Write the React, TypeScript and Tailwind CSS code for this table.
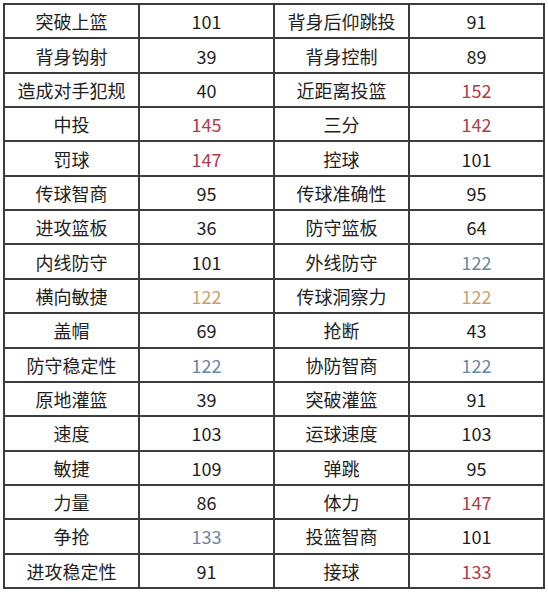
import React from "react";

type C = "k" | "r" | "b" | "o";
const rows: [string, string, C, string, string, C][] = [
  ["突破上篮", "101", "k", "背身后仰跳投", "91", "k"],
  ["背身钩射", "39", "k", "背身控制", "89", "k"],
  ["造成对手犯规", "40", "k", "近距离投篮", "152", "r"],
  ["中投", "145", "r", "三分", "142", "r"],
  ["罚球", "147", "r", "控球", "101", "k"],
  ["传球智商", "95", "k", "传球准确性", "95", "k"],
  ["进攻篮板", "36", "k", "防守篮板", "64", "k"],
  ["内线防守", "101", "k", "外线防守", "122", "b"],
  ["横向敏捷", "122", "o", "传球洞察力", "122", "o"],
  ["盖帽", "69", "k", "抢断", "43", "k"],
  ["防守稳定性", "122", "b", "协防智商", "122", "b"],
  ["原地灌篮", "39", "k", "突破灌篮", "91", "k"],
  ["速度", "103", "k", "运球速度", "103", "k"],
  ["敏捷", "109", "k", "弹跳", "95", "k"],
  ["力量", "86", "k", "体力", "147", "r"],
  ["争抢", "133", "b", "投篮智商", "101", "k"],
  ["进攻稳定性", "91", "k", "接球", "133", "r"],
];

const color: Record<C, string> = {
  k: "text-[#1e1e1e]",
  r: "text-[#b03a48]",
  b: "text-[#6c84a6]",
  o: "text-[#c9a06a]",
};

function Cell({ text, c }: { text: string; c: C }) {
  return (
    <div className={`bg-white flex items-center justify-center text-[18px] leading-none ${color[c]}`}>
      {text}
    </div>
  );
}

export default function App() {
  return (
    <div
      className="w-[548px] h-[592px] bg-white p-[3px]"
      style={{ fontFamily: '"Noto Sans CJK SC", "Noto Sans", sans-serif' }}
    >
      <div className="w-[542px] h-[586px] bg-[#3c3c3c] p-[2px] grid grid-cols-4 grid-rows-[repeat(17,minmax(0,1fr))] gap-[2px]">
        {rows.map((r, i) => (
          <React.Fragment key={i}>
            <Cell text={r[0]} c="k" />
            <Cell text={r[1]} c={r[2]} />
            <Cell text={r[3]} c="k" />
            <Cell text={r[4]} c={r[5]} />
          </React.Fragment>
        ))}
      </div>
    </div>
  );
}
